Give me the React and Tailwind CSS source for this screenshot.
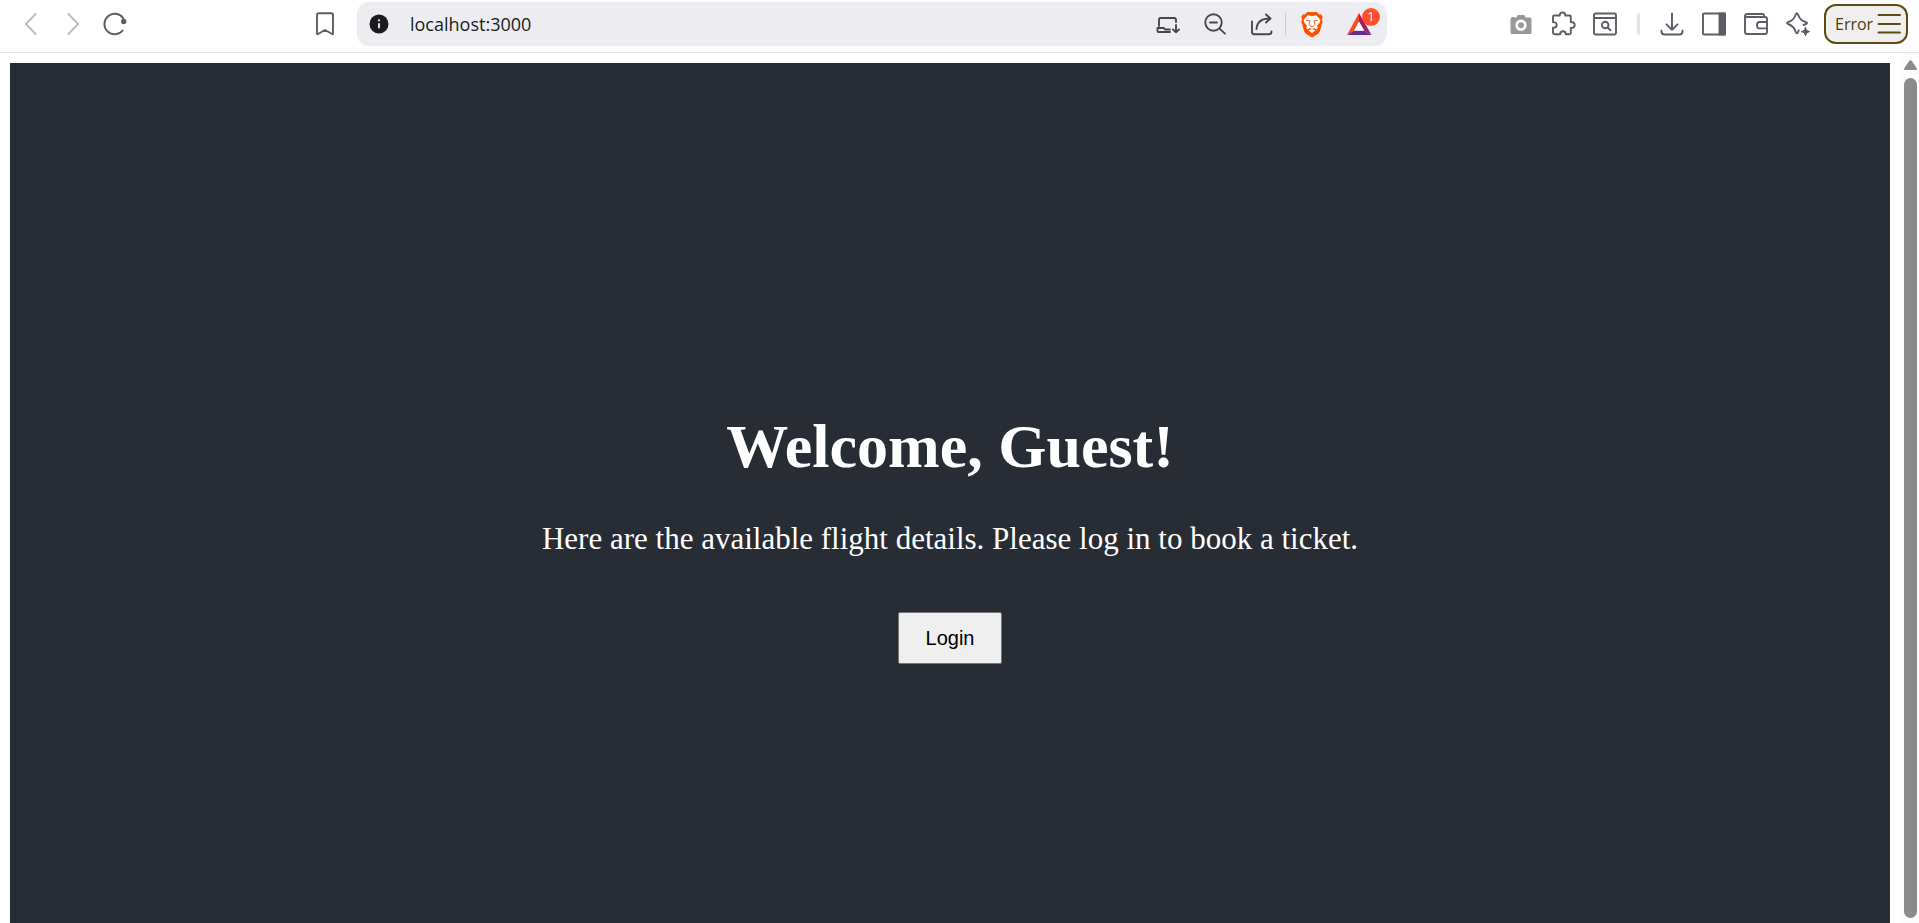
import React from "react";

function Icon({ children, className = "text-[#5b5e66]" }) {
  return (
    <svg
      viewBox="0 0 24 24"
      className={`size-6 shrink-0 overflow-visible ${className}`}
      fill="none"
      stroke="currentColor"
      strokeWidth="1.9"
      strokeLinecap="round"
      strokeLinejoin="round"
      aria-hidden="true"
    >
      {children}
    </svg>
  );
}

function ToolButton({ label, children, iconClass }) {
  return (
    <button type="button" aria-label={label} className="flex h-11 w-[42px] shrink-0 items-center justify-center">
      <Icon className={iconClass}>{children}</Icon>
    </button>
  );
}

function BraveIcon() {
  return (
    <Icon>
      <path
        stroke="none"
        fill="#ff4f00"
        d="M7.2 0h9.6l2.3 2.5 2-.3 1.7 3-1 2.1.8 2.400-2.700 9.600c-.3 1-.9 1.800-1.800 2.400l-4.600 3.100c-1 .7-2 .7-3 0l-4.600-3.100c-.9-.6-1.500-1.400-1.800-2.400L1.400 9.700l.8-2.400-1-2.100 1.700-3 2 .3z"
      />
      <path
        stroke="none"
        fill="#fff"
        d="M7.800 3.200l4.200.7 4.200-.7 4.200 4.700-.7 2.600-2.600 3 .5 2.300-1.200 1.600-2.200-1.300-2.200 1-2.200-1-2.200 1.300-1.200-1.600.5-2.300-2.600-3-.7-2.600zM12 16.800l3.300 1.700L12 21.200l-3.300-2.700z"
      />
      <path
        stroke="#ff4f00"
        strokeWidth="0.9"
        d="M6.500 8.200l3.300.9M17.500 8.200l-3.300.9M9.900 9.100l-.9 4M14.100 9.100l.9 4M10 13.800l2 1.200 2-1.200"
      />
    </Icon>
  );
}

function RewardsIcon() {
  return (
    <Icon>
      <path stroke="none" fill="#ff4724" d="M12 1L0 23l7.300-4.400L12 10z" />
      <path stroke="none" fill="#9e1f63" d="M12 1l12.500 22-7.500-4.400L12 10z" />
      <path stroke="none" fill="#662d91" d="M0 23h24.500L17 18.600H7.300z" />
      <path stroke="none" fill="#fff" d="M12 9.500l5.200 9.200H7z" />
    </Icon>
  );
}

function AddressBar() {
  return (
    <div className="flex h-11 min-w-0 flex-1 items-center rounded-xl bg-[#ededf1] pr-[6px] pl-[10px]">
      <button type="button" aria-label="View site information" className="flex shrink-0 items-center">
        <Icon className="text-[#1a1b20]">
          <circle cx="12" cy="12" r="9.500" fill="currentColor" stroke="none" />
          <path d="M12 11.200v5" stroke="#ededf1" strokeLinecap="butt" />
          <circle cx="12" cy="8.300" r="1.100" fill="#ededf1" stroke="none" />
        </Icon>
      </button>
      <input
        type="text"
        aria-label="Address"
        defaultValue="localhost:3000"
        className="ml-[19px] h-full min-w-0 flex-1 bg-transparent font-['Open_Sans','Noto_Sans',sans-serif] text-[18px] text-[#1a1b20] outline-none"
      />
      <div className="flex items-center">
        <button type="button" aria-label="Install app" className="flex w-[47px] justify-center">
          <Icon className="text-[#46474e]">
            <path d="M3 14V7.500Q3 6 4.500 6H18q2 0 2 2v2" />
            <path d="M1.500 16h6.500l1 1.500h5M1.500 16v3q0 1 1 1H14M20 13v7M17 17.500l3 2.700 3-2.700" />
          </Icon>
        </button>
        <button type="button" aria-label="Zoom out" className="flex w-[47px] justify-center">
          <Icon className="text-[#46474e]">
            <circle cx="10.500" cy="10.500" r="8.200" />
            <path d="M16.600 16.600l5.400 5M7 10.500h7" />
          </Icon>
        </button>
        <button type="button" aria-label="Share" className="flex w-[47px] justify-center">
          <Icon className="text-[#46474e]">
            <path d="M2 9.500V20q0 2.200 2.200 2.200H19q2.500 0 2.500-2.700M6.500 17C7 10 12 6.500 20 6.500M16 2.500l4.500 4-4.500 4" />
          </Icon>
        </button>
      </div>
      <span className="h-[22px] w-px shrink-0 bg-[#c9c9d0]" />
      <button type="button" aria-label="Brave Shields" className="flex w-[51px] shrink-0 justify-center">
        <BraveIcon />
      </button>
      <button type="button" aria-label="Brave Rewards" className="relative flex w-11 shrink-0 justify-center">
        <RewardsIcon />
        <span className="absolute -top-1 right-[1px] flex size-[18px] items-center justify-center rounded-full bg-[#ff5029] font-['Open_Sans',sans-serif] text-[12px] leading-none text-white">
          1
        </span>
      </button>
    </div>
  );
}

function Toolbar() {
  return (
    <header className="flex h-[53px] shrink-0 items-center border-b border-[#e2e2e8] bg-white pb-1">
      <nav aria-label="Navigation" className="flex w-[357px] shrink-0 items-center justify-between pr-[11px] pl-[10px]">
        <div className="flex">
          <ToolButton label="Back" iconClass="text-[#bdbdbf]">
            <path d="M16.500 2L7 12l9.500 10" />
          </ToolButton>
          <ToolButton label="Forward" iconClass="text-[#bdbdbf]">
            <path d="M7.500 2L17 12 7.500 22" />
          </ToolButton>
          <ToolButton label="Reload">
            <path d="M19.700 18.500a10.300 10.300 0 1 1 .4-12.500q.7.900 1 2.200" />
            <circle cx="20.700" cy="9.500" r="2.700" fill="currentColor" stroke="none" />
          </ToolButton>
        </div>
        <ToolButton label="Bookmark this page">
          <path d="M4 3q0-1.800 1.800-1.800h12.400Q20 1.200 20 3v18.500q0 1.200-1 .5l-7-4-7 4q-1 .7-1-.5z" />
        </ToolButton>
      </nav>
      <AddressBar />
      <div className="flex w-[532px] shrink-0 items-center justify-end pr-[11px]">
        <ToolButton label="Screenshot" iconClass="text-[#999]">
          <path
            stroke="none"
            fill="currentColor"
            fillRule="evenodd"
            d="M2 5.500h1V5h2.500v.5h2L8.600 3h6.800l1.200 2.500H21q1.500 0 1.500 1.500v13.500q0 1.500-1.500 1.500H3q-1.500 0-1.500-1.500V7q0-1 .5-1.500zM12 7.500a5.700 5.700 0 1 0 0 11.400a5.700 5.700 0 1 0 0-11.400z"
          />
          <circle cx="12" cy="13.200" r="3" fill="currentColor" stroke="none" />
        </ToolButton>
        <ToolButton label="Extensions">
          <path d="M3.200 3.500H8.700C8.700 1.500 10 .5 11.500.5s2.800 1 2.800 3h4q1.500 0 1.500 1.500v5C22 10 23.700 11 23.700 13S22 16 19.800 16v4.700q0 1.500-1.500 1.500h-3.500c0-2-1.200-3-2.800-3s-2.800 1-2.800 3H3.500Q2 22.200 2 20.700V15.800c2.200 0 3.700-1 3.700-2.900S4.200 10 2 10.200V5q0-1.500 1.200-1.500z" />
        </ToolButton>
        <ToolButton label="Search tabs">
          <rect x="1" y="1.500" width="22" height="21" rx="1.500" />
          <path d="M1 6h22M14.800 15.800l2.700 2.500" />
          <circle cx="12.200" cy="13" r="3.300" />
        </ToolButton>
        <span className="mx-[11px] h-[22px] w-[3px] shrink-0 rounded-full bg-[#e2e2e7]" />
        <ToolButton label="Downloads">
          <path d="M12 1.500v16M6.500 12.300L12 17.800l5.500-5.500M1.500 18.500v1q0 3 3 3h15q3 0 3-3v-1" />
        </ToolButton>
        <ToolButton label="Sidebar">
          <rect x="1" y="1.500" width="22" height="21" rx="1" />
          <path d="M17.500 1.500H23v21h-5.500z" fill="currentColor" />
        </ToolButton>
        <ToolButton label="Wallet">
          <path d="M20 5V3.500Q20 2 18.500 2H3.500Q1 2 1 4.200V20q0 2 2 2h18q2 0 2-2V7q0-2-2-2H3.500Q1 5.500 1 3.500" />
          <path d="M23 10h-7.500q-2.500 0-2.500 3.200t2.500 3.200H23" />
        </ToolButton>
        <ToolButton label="Leo AI">
          <path d="M9.900 2.200q1-2 2 0C13 6 14.500 8.500 20 10.200q2 .8 0 1.800l-2.500 1M9.900 2.200C8.500 6.500 7 8.500 2 10.200q-2 .8 0 1.800c4.500 1.500 6.500 4 7.900 8.300q1 2 2 0l.9-2" />
          <path d="M19.500 15.500l1.200 2.900 2.900 1.200-2.900 1.200-1.200 2.900-1.200-2.900-2.900-1.200 2.900-1.200z" fill="currentColor" strokeWidth="1" />
        </ToolButton>
        <button
          type="button"
          className="ml-[5px] flex h-10 w-[84px] shrink-0 items-center justify-between rounded-xl border-2 border-[#5c4b12] bg-[#f1efed] pr-[5px] pl-[9px] font-['Open_Sans','Noto_Sans',sans-serif] text-[16px] text-[#4c3d0c]"
        >
          Error
          <Icon className="text-[#5c4b12]">
            <path d="M1.500 3h21.500M1.500 12h21.500M1.500 20.500h21.500" />
          </Icon>
        </button>
      </div>
    </header>
  );
}

function Scrollbar() {
  return (
    <div aria-hidden="true" className="flex w-[19px] shrink-0 flex-col items-center bg-[#fcfcfc] pt-[7px] pb-[5px] pl-[2px]">
      <svg viewBox="0 0 13 10" className="h-[10px] w-[13px] fill-[#8b8b8b]">
        <path d="M5.200 1q1.300-1.500 2.600 0l5 7.200q.6 1.800-1 1.800H1.200q-1.600 0-1-1.800z" />
      </svg>
      <div className="mt-[8px] w-[13px] flex-1 rounded-full bg-[#8b8b8b]" />
    </div>
  );
}

export default function App() {
  return (
    <div className="flex h-screen flex-col overflow-hidden bg-white">
      <Toolbar />
      <div className="flex min-h-0 flex-1">
        <main className="min-w-0 flex-1 overflow-hidden p-[10px]">
          <section className="flex min-h-[calc(100vh-53px)] flex-col items-center justify-center bg-[#282c34] pt-20 text-center font-['Liberation_Serif',serif] text-white">
            <h1 className="text-[62px] leading-[68px] font-bold">Welcome, Guest!</h1>
            <p className="mt-[42px] text-[31px] leading-[34px]">
              Here are the available flight details. Please log in to book a ticket.
            </p>
            <button
              type="button"
              className="mt-14 rounded-[2px] border border-[#767676] bg-[#efefef] px-[27px] py-[13px] font-['Liberation_Sans',sans-serif] text-[20px] leading-6 text-black"
            >
              Login
            </button>
          </section>
        </main>
        <Scrollbar />
      </div>
    </div>
  );
}
